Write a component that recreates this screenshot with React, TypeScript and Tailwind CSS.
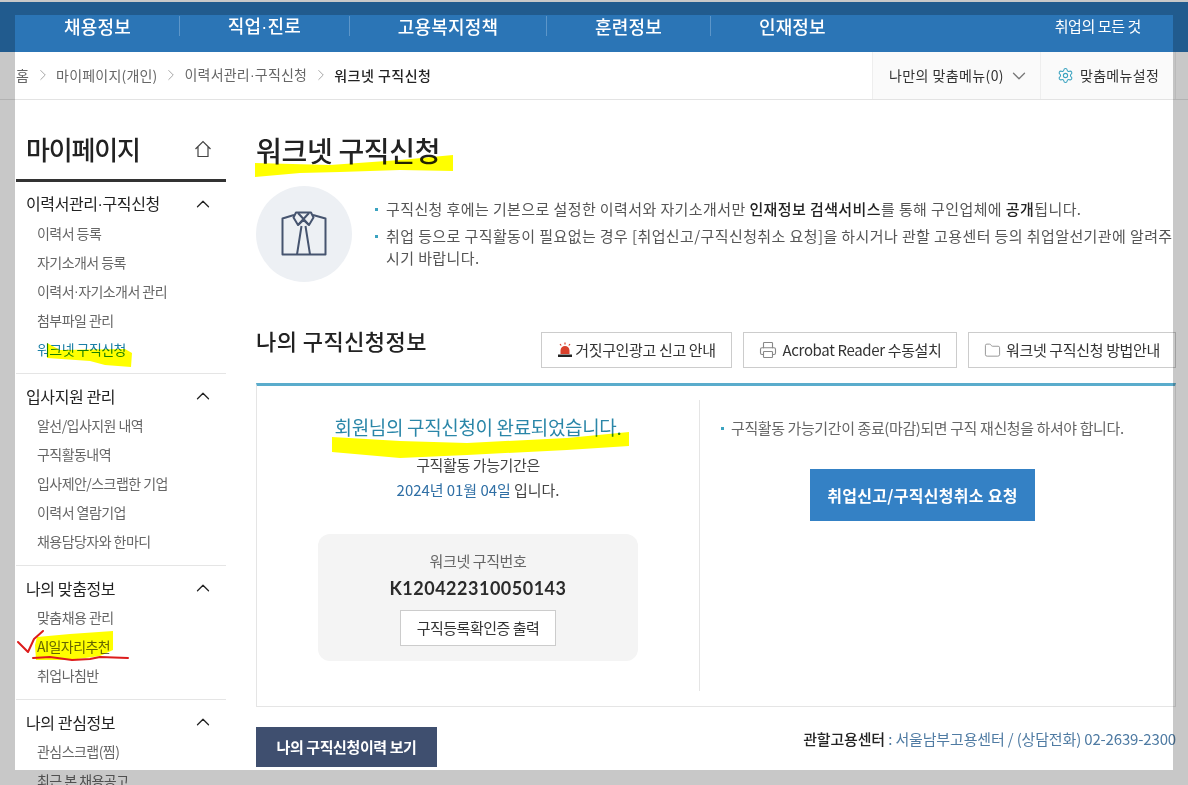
import { ChevronDown, ChevronRight, ChevronUp, Folder, Printer, Settings } from "lucide-react";

const navItems = ["채용정보", "직업·진로", "고용복지정책", "훈련정보", "인재정보"];

const sideMenu = [
  {
    title: "이력서관리·구직신청",
    items: ["이력서 등록", "자기소개서 등록", "이력서·자기소개서 관리", "첨부파일 관리", "워크넷 구직신청"],
  },
  {
    title: "입사지원 관리",
    items: ["알선/입사지원 내역", "구직활동내역", "입사제안/스크랩한 기업", "이력서 열람기업", "채용담당자와 한마디"],
  },
  {
    title: "나의 맞춤정보",
    items: ["맞춤채용 관리", "AI일자리추천", "취업나침반"],
  },
  {
    title: "나의 관심정보",
    items: ["관심스크랩(찜)", "최근 본 채용공고"],
  },
];

// the CJK font sets "·" very wide, the reference has a narrow one
const Dotted = ({ text }: { text: string }) => {
  const [a, b] = text.split("·");
  if (b === undefined) return <>{text}</>;
  return (
    <>
      {a}
      <span className="font-['Liberation_Sans',sans-serif]">·</span>
      {b}
    </>
  );
};

const Sidebar = () => (
  <aside className="w-[210px] shrink-0">
    <div className="flex h-[82px] items-end border-b-[3px] border-[#333] pb-[7px] pl-[10px] pr-[14px]">
      <div className="flex h-[46px] w-full items-center justify-between">
        <span className="text-[26px] font-medium leading-none tracking-[-1.2px] text-[#222]">마이페이지</span>
        <svg width="18" height="18" viewBox="0 0 18 18" fill="none" stroke="#444" strokeWidth="1.2">
          <path d="M1.5 9 9 1.5 16.5 9M4 7v9.5h10V7" />
        </svg>
      </div>
    </div>
    {sideMenu.map((section) => (
      <div key={section.title} className="border-b border-[#e5e5e5] pb-[9px] pt-2">
        <div className="flex h-[28px] items-center justify-between pl-[10px] pr-[12px]">
          <span className="text-[16px] tracking-[-0.4px] text-[#222]">
            <Dotted text={section.title} />
          </span>
          <ChevronUp size={22} strokeWidth={1.4} className="text-[#222]" />
        </div>
        <ul className="mt-[1px]">
          {section.items.map((item) => (
            <li
              key={item}
              className={`flex h-[29px] items-center pl-[21px] text-[14px] tracking-[-0.55px] ${
                item === "워크넷 구직신청" ? "text-[#1a7fa6]" : "text-[#666]"
              }`}
            >
              <Dotted text={item} />
            </li>
          ))}
        </ul>
      </div>
    ))}
  </aside>
);

const ToolButton = ({ width, icon, label }: { width: string; icon: React.ReactNode; label: string }) => (
  <a className={`flex h-[36px] items-center justify-center border border-[#ccc] text-[15px] tracking-[-0.35px] text-[#333] ${width}`}>
    {icon}
    {label}
  </a>
);

export default function App() {
  return (
    <div className="relative h-[785px] w-[1188px] overflow-hidden bg-white pt-[2px] font-['Noto_Sans_CJK_KR',sans-serif]">
      {/* Top nav */}
      <nav className="flex h-[50px] items-center bg-[#2b75b6] pb-[2px] pl-[16px] text-white">
        {navItems.map((item, i) => (
          <div key={item} className="flex items-center">
            <span className="px-[48px] text-[18px] font-medium tracking-[0.15px]">
              <Dotted text={item} />
            </span>
            {i < navItems.length - 1 && <span className="h-[20px] w-px bg-[#5d96c9]" />}
          </div>
        ))}
        <span className="ml-auto mr-[47px] text-[15px] tracking-[-0.4px]">취업의 모든 것</span>
      </nav>

      {/* Breadcrumb */}
      <div className="flex h-[48px] items-stretch border-b border-[#e3e3e3] pl-[16px]">
        <div className="flex flex-1 items-center pb-[1px] text-[14px] tracking-[0.2px] text-[#666]">
          <span>홈</span>
          <ChevronRight size={18} strokeWidth={1} className="mx-[4.5px] text-[#888]" />
          <span>마이페이지(개인)</span>
          <ChevronRight size={18} strokeWidth={1} className="mx-[4.5px] text-[#888]" />
          <span>
            <Dotted text="이력서관리·구직신청" />
          </span>
          <ChevronRight size={18} strokeWidth={1} className="mx-[4.5px] text-[#888]" />
          <span className="font-medium tracking-[0.5px] text-[#222]">워크넷 구직신청</span>
        </div>
        <div className="flex w-[168px] items-center gap-[4px] border-l border-[#eee] bg-[#fafafa] pl-[16px] text-[14px] tracking-[0.4px] text-[#333]">
          나만의 맞춤메뉴(0)
          <ChevronDown size={22} strokeWidth={1.4} className="text-[#777]" />
        </div>
        <div className="flex w-[136px] items-center gap-[6px] border-x border-[#eee] bg-[#fafafa] pl-[16px] text-[14px] tracking-[0.3px] text-[#333]">
          <Settings size={17} strokeWidth={1.5} className="text-[#3ba3c0]" />
          맞춤메뉴설정
        </div>
        <div className="w-[12px]" />
      </div>

      <div className="flex pl-[16px]">
        <Sidebar />

        <main className="ml-[30px] w-[920px] shrink-0">
          <h1 className="mt-[30px] flex h-[40px] items-center text-[28px] font-medium tracking-[-0.3px] text-[#222]">
            워크넷 구직신청
          </h1>

          {/* Intro */}
          <div className="mt-[16px] flex h-[96px]">
            <div className="flex h-[96px] w-[96px] items-center justify-center rounded-full bg-[#edf0f4]">
              <svg width="46" height="46" viewBox="0 0 46 46" fill="none" stroke="#46546f" strokeWidth="2" strokeLinejoin="round">
                <path d="M13 4 1.500 7.500v36h43v-36L32 4" />
                <path d="M15 1.500h15l2.500 5L28 14l-5.500-5L17 14l-4.500-7.500z" />
                <path d="M17 2 28 14M28 2 17 14M20.500 15 16 43.500M24.500 15 29 43.500" />
              </svg>
            </div>
            <ul className="ml-[23px] pt-[12px] text-[15px] leading-[22px] tracking-[0.4px] text-[#555]">
              <li className="flex whitespace-nowrap">
                <span className="mr-[8px] mt-[10px] h-[3px] w-[3px] shrink-0 bg-[#3ba3c0]" />
                <span>
                  구직신청 후에는 기본으로 설정한 이력서와 자기소개서만 <b className="font-medium text-[#222]">인재정보 검색서비스</b>를 통해 구인업체에{" "}
                  <b className="font-medium text-[#222]">공개</b>됩니다.
                </span>
              </li>
              <li className="mt-[5px] flex whitespace-nowrap">
                <span className="mr-[8px] mt-[10px] h-[3px] w-[3px] shrink-0 bg-[#3ba3c0]" />
                <span>
                  취업 등으로 구직활동이 필요없는 경우 [취업신고/구직신청취소 요청]을 하시거나 관할 고용센터 등의 취업알선기관에 알려주
                  <br />
                  시기 바랍니다.
                </span>
              </li>
            </ul>
          </div>

          {/* Section heading + buttons */}
          <div className="mt-[50px] flex h-[36px] items-start">
            <h2 className="-mt-[6px] text-[22px] font-medium leading-[28px] tracking-[0.45px] text-[#222]">나의 구직신청정보</h2>
            <div className="ml-auto flex gap-[11px]">
              <ToolButton
                width="w-[191px] gap-[2px]"
                label="거짓구인광고 신고 안내"
                icon={
                  <svg width="16" height="16" viewBox="0 0 16 16">
                    <path d="M3.500 12V8.500a4.500 4.500 0 0 1 9 0V12z" fill="#d9402b" />
                    <path d="M1 12.500h14V15H1z" fill="#222" />
                    <path d="M8 .5v2M3 2l1.200 1.500M13 2l-1.200 1.500" stroke="#d9402b" strokeWidth="1.200" />
                  </svg>
                }
              />
              <ToolButton
                width="w-[214px] gap-[6px]"
                label="Acrobat Reader 수동설치"
                icon={<Printer size={18} strokeWidth={1.5} className="text-[#888]" />}
              />
              <ToolButton
                width="w-[208px] gap-[5px]"
                label="워크넷 구직신청 방법안내"
                icon={<Folder size={17} strokeWidth={1.2} className="text-[#888]" />}
              />
            </div>
          </div>

          {/* Result box */}
          <div className="mt-[15px] h-[324px] border-x border-b border-t-[3px] border-[#e5e5e5] border-t-[#5aaccc] pt-[14px]">
            <div className="flex h-[291px]">
              <div className="flex w-[443px] flex-col items-center border-r border-[#e5e5e5]">
                <p className="mt-[14px] h-[26px] text-[19px] leading-[26px] tracking-[-0.35px] text-[#2a86a8]">
                  회원님의 구직신청이 완료되었습니다.
                </p>
                <p className="mt-[12px] h-[25px] text-[15px] leading-[25px] tracking-[-0.4px] text-[#444]">구직활동 가능기간은</p>
                <p className="h-[25px] text-[15px] leading-[25px] tracking-[-0.05px] text-[#444]">
                  <span className="text-[#2f6fa5]">2024년 01월 04일</span> 입니다.
                </p>
                <div className="mt-[32px] flex h-[127px] w-[320px] flex-col items-center rounded-[12px] bg-[#f4f4f4] pt-[15px]">
                  <p className="h-[24px] text-[15px] leading-[24px] tracking-[-0.4px] text-[#666]">워크넷 구직번호</p>
                  <p className="mt-[3px] h-[24px] font-['Lato',sans-serif] text-[18px] font-bold leading-[24px] tracking-[0.5px] text-[#2b2b2b]">
                    K120422310050143
                  </p>
                  <a className="mt-[10px] flex h-[36px] w-[156px] items-center justify-center border border-[#ccc] bg-white text-[15px] tracking-[-0.5px] text-[#333]">
                    구직등록확인증 출력
                  </a>
                </div>
              </div>
              <div className="flex-1 pl-[21px] pt-[18px]">
                <p className="flex h-[20px] items-center whitespace-nowrap text-[15px] tracking-[-0.4px] text-[#666]">
                  <span className="mr-[7px] h-[3px] w-[3px] bg-[#3ba3c0]" />
                  구직활동 가능기간이 종료(마감)되면 구직 재신청을 하셔야 합니다.
                </p>
                <a className="ml-[89px] mt-[31px] flex h-[52px] w-[225px] items-center justify-center bg-[#3481c5] text-[16px] font-bold tracking-[0.3px] text-white">
                  취업신고/구직신청취소 요청
                </a>
              </div>
            </div>
          </div>

          {/* Bottom row */}
          <div className="mt-[20px] flex items-start justify-between">
            <a className="flex h-[40px] w-[181px] items-center justify-center bg-[#3f4f6f] text-[15px] font-bold tracking-[-0.4px] text-white">
              나의 구직신청이력 보기
            </a>
            <p className="mt-[2px] text-[15px] leading-[20px] tracking-[-0.16px] text-[#4f7ba3]">
              <b className="font-medium text-[#222]">관할고용센터</b> : 서울남부고용센터 / (상담전화) 02-2639-2300
            </p>
          </div>
        </main>
      </div>

      {/* Hand-drawn highlighter and pen marks */}
      <svg className="pointer-events-none absolute left-0 top-0 mix-blend-multiply" width="1188" height="785" viewBox="0 0 1188 785">
        <g fill="#ffff00">
          <path d="M255 163 330 165 400 160 453 155 453 171 400 170 340 172 300 173 255 177z" />
          <path d="M332 437 400 441 467 443 567 438 629 432 629 446 567 450 467 455 400 458 332 452z" />
          <path d="M47 343 60 350 125 349 132 353 131 367 105 365 90 361 47 358z" />
          <path d="M37 637 70 634 113 631 113 650 100 656 70 660 36 660 35 645z" />
        </g>
        <g fill="none" stroke="#dd1c1c" strokeWidth="2" strokeLinecap="round" strokeLinejoin="round">
          <path d="M18 642 28 652 34 639 43 631" />
          <path d="M33 658 50 657 72 660 90 659 100 657 128 658" />
        </g>
      </svg>

      {/* Translucent frame round the capture */}
      <div className="pointer-events-none absolute inset-x-0 top-0 h-[15px] bg-black/[0.215]" />
      <div className="pointer-events-none absolute bottom-0 inset-x-0 h-[15px] bg-black/[0.215]" />
      <div className="pointer-events-none absolute bottom-[15px] left-0 top-[15px] w-[15px] bg-black/[0.215]" />
      <div className="pointer-events-none absolute bottom-[15px] right-0 top-[15px] w-[15px] bg-black/[0.215]" />
    </div>
  );
}
